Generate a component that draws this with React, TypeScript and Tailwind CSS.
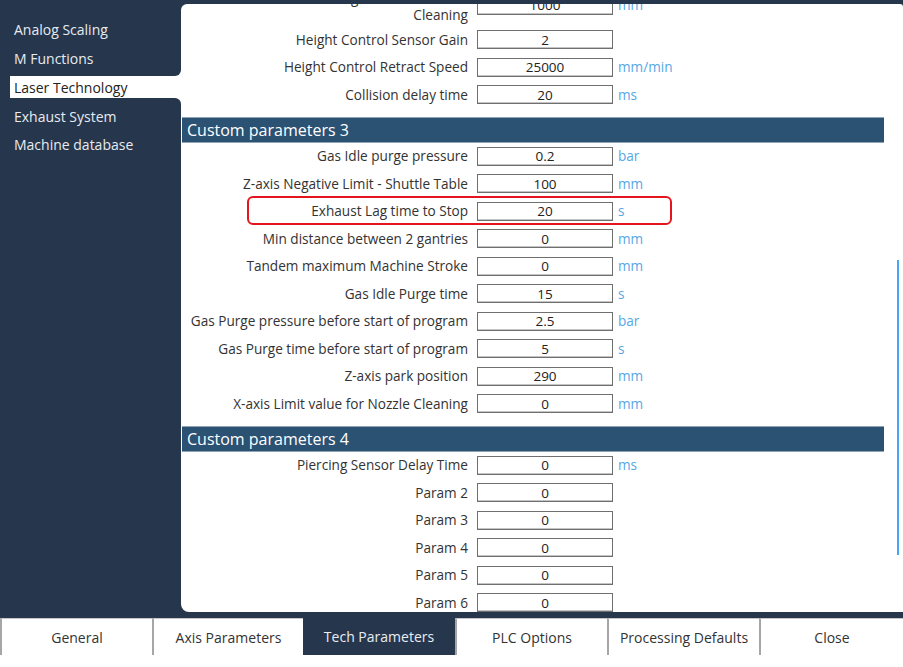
import React from 'react'

type Param = {
	label: string
	value: string
	unit?: string
	highlight?: boolean
}

const groupTop: Param[] = [
	{ label: 'Height Control Sensor Gain', value: '2' },
	{ label: 'Height Control Retract Speed', value: '25000', unit: 'mm/min' },
	{ label: 'Collision delay time', value: '20', unit: 'ms' },
]

const group3: Param[] = [
	{ label: 'Gas Idle purge pressure', value: '0.2', unit: 'bar' },
	{ label: 'Z-axis Negative Limit - Shuttle Table', value: '100', unit: 'mm' },
	{ label: 'Exhaust Lag time to Stop', value: '20', unit: 's', highlight: true },
	{ label: 'Min distance between 2 gantries', value: '0', unit: 'mm' },
	{ label: 'Tandem maximum Machine Stroke', value: '0', unit: 'mm' },
	{ label: 'Gas Idle Purge time', value: '15', unit: 's' },
	{ label: 'Gas Purge pressure before start of program', value: '2.5', unit: 'bar' },
	{ label: 'Gas Purge time before start of program', value: '5', unit: 's' },
	{ label: 'Z-axis park position', value: '290', unit: 'mm' },
	{ label: 'X-axis Limit value for Nozzle Cleaning', value: '0', unit: 'mm' },
]

const group4: Param[] = [
	{ label: 'Piercing Sensor Delay Time', value: '0', unit: 'ms' },
	{ label: 'Param 2', value: '0' },
	{ label: 'Param 3', value: '0' },
	{ label: 'Param 4', value: '0' },
	{ label: 'Param 5', value: '0' },
	{ label: 'Param 6', value: '0' },
]

const tabs = ['General', 'Axis Parameters', 'Tech Parameters', 'PLC Options', 'Processing Defaults', 'Close']

const ValueBox = ({ value }: { value: string }) => (
	<div className="ml-[9px] flex h-[19px] w-[136px] shrink-0 items-center justify-center border border-[#6f6f6f] bg-white text-[13.5px] text-[#222] shadow-[inset_0_-1px_0_#c4c4c4]">
		{value}
	</div>
)

const Row = ({ label, value, unit, highlight }: Param) => (
	<div className="relative flex h-[27.5px] items-center">
		<div className="w-[287px] shrink-0 text-right text-[13.6px] text-[#333]">{label}</div>
		<ValueBox value={value} />
		<div className="ml-[5px] text-[13.6px] text-[#56a7e6]">{unit}</div>
		{highlight && (
			<div className="absolute left-[66px] top-[-2px] h-[29px] w-[425px] rounded-[6px] border-2 border-[#e3161d]" />
		)}
	</div>
)

const Header = ({ title }: { title: string }) => (
	<div className="mt-2 mr-[19px] ml-[1px] flex h-[26px] items-center border-y border-[#8fa3b6] bg-[#2b5273] pl-[5px] text-[16px] text-white">
		{title}
	</div>
)

export default function App() {
	return (
		<div
			className="h-[667px] w-[903px] overflow-hidden bg-white"
			style={{ fontFamily: '"Open Sans", "Liberation Sans", sans-serif' }}
		>
			<div className="flex h-[618px] bg-[#26364c]">
				{/* side menu */}
				<div className="flex w-[181px] shrink-0 flex-col bg-white text-[14px]">
					<div className="h-[76px] rounded-br-[6px] bg-[#26364c] pt-[15px] text-[#e7ebf0]">
						<div className="flex h-[29px] items-center pl-[14px]">Analog Scaling</div>
						<div className="flex h-[29px] items-center pl-[14px]">M Functions</div>
					</div>
					<div className="flex h-[22px]">
						<div className="w-[10px] bg-[#26364c]" />
						<div className="flex flex-1 items-center bg-white pl-[4px] text-[#222]">Laser Technology</div>
					</div>
					<div className="flex-1 rounded-tr-[6px] bg-[#26364c] pt-[4px] text-[#e7ebf0]">
						<div className="flex h-[28px] items-center pl-[14px]">Exhaust System</div>
						<div className="flex h-[28px] items-center pl-[14px]">Machine database</div>
					</div>
				</div>

				{/* parameter panel */}
				<div className="relative mt-[4px] mb-[6px] flex-1 overflow-hidden rounded-tl-[6px] rounded-bl-[8px] rounded-tr-[3px] bg-white">
					<div className="-mt-[19px]">
						<div className="flex h-[41px] items-center">
							<div className="w-[287px] shrink-0 text-right text-[13.6px] leading-[17px] text-[#333]">
								Height Control Nozzle
								<br />
								Cleaning
							</div>
							<div className="mb-[1px]">
								<ValueBox value="1000" />
							</div>
							<div className="ml-[5px] text-[13.6px] text-[#56a7e6]">mm</div>
						</div>
						{groupTop.map((p) => (
							<Row key={p.label} {...p} />
						))}
						<Header title="Custom parameters 3" />
						{group3.map((p) => (
							<Row key={p.label} {...p} />
						))}
						<Header title="Custom parameters 4" />
						{group4.map((p) => (
							<Row key={p.label} {...p} />
						))}
					</div>
					<div className="absolute left-[716px] top-[256px] h-[295px] w-[2px] bg-[#4aa6f2]" />
				</div>
			</div>

			{/* bottom tabs */}
			<div className="grid h-[37px] grid-cols-[152px_151px_152px_152px_152px_1fr] bg-[#26364c]">
				{tabs.map((t) => (
					<div
						key={t}
						className={
							t === 'Tech Parameters'
								? 'flex items-center justify-center bg-[#26364c] text-[14px] text-[#e9edf2]'
								: 'flex items-center justify-center border-t border-l-2 border-t-[#c6c6c6] border-l-[#a6a6a6] bg-white text-[14px] text-[#333]'
						}
					>
						{t}
					</div>
				))}
			</div>
		</div>
	)
}
